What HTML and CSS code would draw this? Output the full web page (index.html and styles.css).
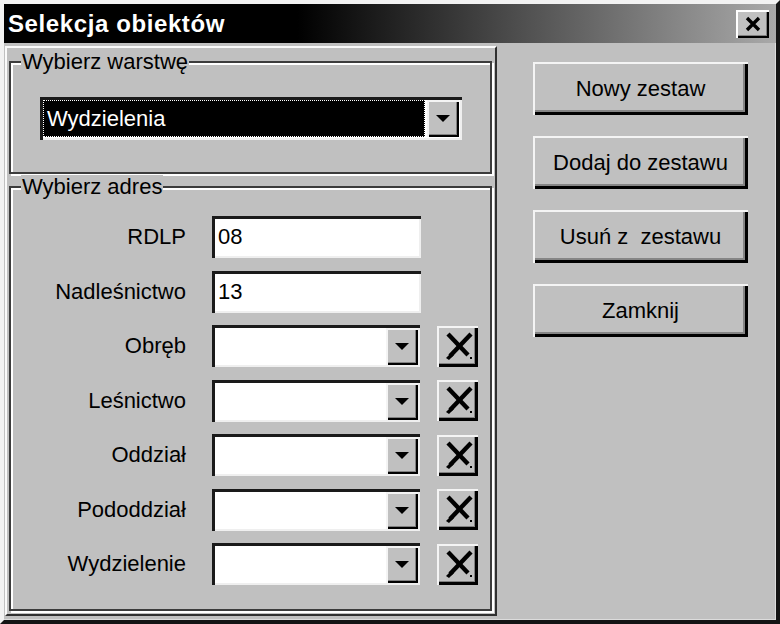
FILE: index.html
```html
<!DOCTYPE html>
<html lang="pl">
<head>
<meta charset="utf-8">
<title>Selekcja obiektów</title>
<link rel="stylesheet" href="styles.css">
</head>
<body>
<div class="window">
  <div class="titlebar">
    <span class="title">Selekcja obiektów</span>
    <button class="close" aria-label="Zamknij">
      <svg viewBox="0 0 20 16" width="20" height="16"><path d="M4 2 L16 14 M16 2 L4 14" stroke="#000" stroke-width="3.4" fill="none"/></svg>
    </button>
  </div>
  <div class="main">
    <div class="panel">
      <fieldset class="group group-layer">
        <legend>Wybierz warstwę</legend>
        <div class="group-body layer-body">
          <div class="combo combo-layer">
            <div class="combo-value selected">Wydzielenia</div>
            <span class="arrow-btn"><span class="tri"></span></span>
          </div>
        </div>
      </fieldset>
      <fieldset class="group group-address">
        <legend>Wybierz adres</legend>
        <div class="group-body address-body">
          <div class="row"><span class="lbl">RDLP</span><div class="field">08</div></div>
          <div class="row"><span class="lbl">Nadleśnictwo</span><div class="field">13</div></div>
          <div class="row"><span class="lbl">Obręb</span><div class="combo"><div class="combo-value"></div><span class="arrow-btn"><span class="tri"></span></span></div><button class="clear" aria-label="Wyczyść"><svg viewBox="0 0 41 41" width="41" height="41"><path d="M11 8 L31 29" stroke="#000" stroke-width="4.4" fill="none"/><path d="M34 8 L13 30" stroke="#000" stroke-width="4.4" fill="none"/><path d="M9 32 L15 26 L17 29 L12 34 Z" fill="#000"/><rect x="33" y="31" width="2" height="2" fill="#000"/></svg></button></div>
          <div class="row"><span class="lbl">Leśnictwo</span><div class="combo"><div class="combo-value"></div><span class="arrow-btn"><span class="tri"></span></span></div><button class="clear" aria-label="Wyczyść"><svg viewBox="0 0 41 41" width="41" height="41"><path d="M11 8 L31 29" stroke="#000" stroke-width="4.4" fill="none"/><path d="M34 8 L13 30" stroke="#000" stroke-width="4.4" fill="none"/><path d="M9 32 L15 26 L17 29 L12 34 Z" fill="#000"/><rect x="33" y="31" width="2" height="2" fill="#000"/></svg></button></div>
          <div class="row"><span class="lbl">Oddział</span><div class="combo"><div class="combo-value"></div><span class="arrow-btn"><span class="tri"></span></span></div><button class="clear" aria-label="Wyczyść"><svg viewBox="0 0 41 41" width="41" height="41"><path d="M11 8 L31 29" stroke="#000" stroke-width="4.4" fill="none"/><path d="M34 8 L13 30" stroke="#000" stroke-width="4.4" fill="none"/><path d="M9 32 L15 26 L17 29 L12 34 Z" fill="#000"/><rect x="33" y="31" width="2" height="2" fill="#000"/></svg></button></div>
          <div class="row"><span class="lbl">Pododdział</span><div class="combo"><div class="combo-value"></div><span class="arrow-btn"><span class="tri"></span></span></div><button class="clear" aria-label="Wyczyść"><svg viewBox="0 0 41 41" width="41" height="41"><path d="M11 8 L31 29" stroke="#000" stroke-width="4.4" fill="none"/><path d="M34 8 L13 30" stroke="#000" stroke-width="4.4" fill="none"/><path d="M9 32 L15 26 L17 29 L12 34 Z" fill="#000"/><rect x="33" y="31" width="2" height="2" fill="#000"/></svg></button></div>
          <div class="row"><span class="lbl">Wydzielenie</span><div class="combo"><div class="combo-value"></div><span class="arrow-btn"><span class="tri"></span></span></div><button class="clear" aria-label="Wyczyść"><svg viewBox="0 0 41 41" width="41" height="41"><path d="M11 8 L31 29" stroke="#000" stroke-width="4.4" fill="none"/><path d="M34 8 L13 30" stroke="#000" stroke-width="4.4" fill="none"/><path d="M9 32 L15 26 L17 29 L12 34 Z" fill="#000"/><rect x="33" y="31" width="2" height="2" fill="#000"/></svg></button></div>
        </div>
      </fieldset>
    </div>
    <div class="actions">
      <button class="btn btn-new">Nowy zestaw</button>
      <button class="btn">Dodaj do zestawu</button>
      <button class="btn">Usuń z&nbsp; zestawu</button>
      <button class="btn">Zamknij</button>
    </div>
  </div>
</div>
</body>
</html>
```
FILE: styles.css
```css
* { box-sizing: border-box; }

html, body {
  margin: 0;
  padding: 0;
}

body {
  width: 780px;
  height: 624px;
  overflow: hidden;
  background: #c0c0c0;
  font-family: "Liberation Sans", Arial, sans-serif;
  font-size: 22px;
  color: #000;
}

.window {
  width: 780px;
  height: 624px;
  background: #c0c0c0;
  border-style: solid;
  border-width: 4px;
  border-color: #f2f2f2 #141414 #141414 #f2f2f2;
  box-shadow: inset -1px -1px 0 #dcdcdc;
  display: flex;
  flex-direction: column;
}

.titlebar {
  flex: none;
  height: 39px;
  display: flex;
  align-items: center;
  justify-content: space-between;
  padding: 0 7px 0 4px;
  background: linear-gradient(to right, #000 0%, #000 38%, #a9a9a9 100%);
}

.title {
  color: #fff;
  font-weight: bold;
  font-size: 24px;
  letter-spacing: 0.6px;
  line-height: 28px;
}

button {
  font: inherit;
  color: #000;
  margin: 0;
  padding: 0;
  border: none;
  background: #c0c0c0;
  cursor: default;
}

.close {
  width: 33px;
  height: 28px;
  display: flex;
  align-items: center;
  justify-content: center;
  box-shadow: inset 2px 2px 0 #fff, inset -2px -2px 0 #000, inset -3px -3px 0 #808080;
}

.main {
  flex: 1;
  display: flex;
  padding: 3px 0 0 1px;
}

.panel {
  flex: none;
  width: 492px;
  height: 570px;
  border: 2px solid;
  border-color: #fafafa #303030 #303030 #fafafa;
}

.group {
  margin: 0 0 0 2px;
  width: 483px;
  min-width: 0;
  padding: 0;
  border: 2px solid #3c3c3c;
  box-shadow: 2px 2px 0 #fff, inset 2px 2px 0 #fff;
}

.group legend {
  margin-left: 10px;
  padding: 0 1px;
  line-height: 24px;
  background: #c0c0c0;
}

.group-layer { margin-top: 2px; }
.group-address { margin-top: 1px; }

.layer-body {
  padding: 23px 0 32px 29px;
}

.address-body {
  padding: 17px 0 24px 0;
  display: flex;
  flex-direction: column;
  gap: 12.5px;
}

.row {
  display: flex;
  align-items: center;
  height: 42px;
}

.lbl {
  width: 175px;
  text-align: right;
  margin-right: 26px;
  white-space: nowrap;
}

.field {
  width: 209px;
  height: 42px;
  background: #fff;
  padding: 0 0 0 6px;
  line-height: 42px;
  box-shadow: inset 3px 3px 0 #1a1a1a, inset -2px -2px 0 #efefef;
}

.combo {
  width: 208px;
  height: 42px;
  background: #fff;
  display: flex;
  padding: 3px 2px 2px 3px;
  box-shadow: inset 3px 3px 0 #1a1a1a, inset -2px -2px 0 #efefef;
}

.combo-value {
  flex: 1;
  min-width: 0;
}

.arrow-btn {
  flex: none;
  width: 32px;
  background: #c0c0c0;
  display: flex;
  align-items: center;
  justify-content: center;
  box-shadow: inset 2px 2px 0 #f4f4f4, inset -2px -2px 0 #000, inset -3px -3px 0 #808080;
}

.tri {
  width: 0;
  height: 0;
  border-left: 7px solid transparent;
  border-right: 7px solid transparent;
  border-top: 7px solid #000;
}

.combo-layer {
  width: 422px;
  height: 43px;
  padding: 3px 3px 3px 3px;
}

.combo-layer .combo-value {
  margin-right: 2px;
}

.selected {
  background: #000;
  color: #fff;
  border: 1px dotted #fff;
  padding-left: 3px;
  line-height: 35px;
}

.clear {
  flex: none;
  width: 41px;
  height: 41px;
  margin-left: 17px;
  display: block;
  box-shadow: inset 2px 2px 0 #f4f4f4, inset -3px -3px 0 #000, inset -4px -4px 0 #808080;
}

.clear svg { display: block; }

.actions {
  flex: none;
  margin-left: 36px;
  padding-top: 16px;
  display: flex;
  flex-direction: column;
  gap: 21px;
}

.btn {
  width: 215px;
  height: 53px;
  text-align: center;
  box-shadow: inset 2px 2px 0 #f4f4f4, inset -3px -3px 0 #000, inset -5px -5px 0 #858585;
}
```
